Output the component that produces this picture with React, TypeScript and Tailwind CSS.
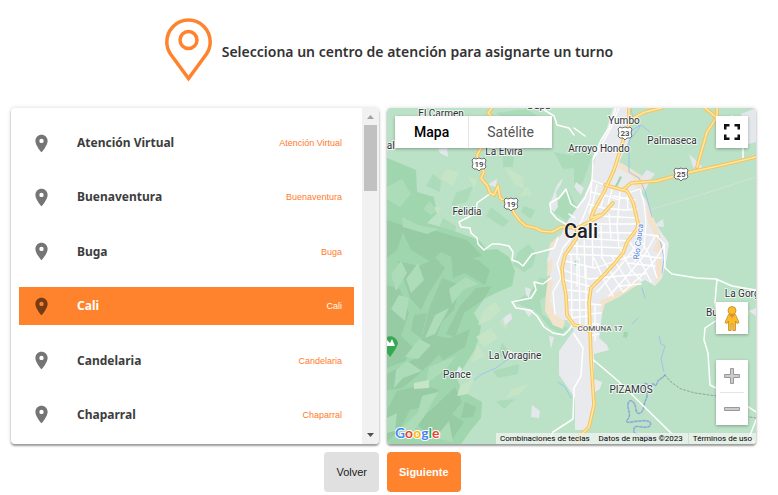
import React, { useState } from 'react';

const CENTERS = ['Atención Virtual', 'Buenaventura', 'Buga', 'Cali', 'Candelaria', 'Chaparral'];

const URBAN =
  'M226 0L245 0L243 30L232 54L246 62L254 69L250 79L259 92L265 109L272 121L282 135L280 149L275 170L268 178L258 172L232 187L217 194L215 207L212 230L220 237L222 242L207 246L207 271L215 274L213 281L208 284L208 300L200 322L188 322L188 290L172 267L172 243L187 222L180 212L166 213L160 198L163 170L160 152L164 139L174 127L180 114L190 100L197 88L204 74L206 58L211 42L220 20Z';

const YELLOW_ROADS = [
  'M105 0L101 5L105 9L97 30L94 40L90 47L92 56L97 64L94 70L97 74L100 77L103 85L107 87L111 78L113 90L124 96L127 105L133 113L139 118L149 120L154 123L165 124L174 119L190 120L206 112L215 107L226 95',
  'M242 0L242 17L237 30L227 62L217 84L207 102L204 110L213 107',
  'M242 14L250 8L258 4L275 0',
  'M237 81L244 75L270 73L284 69L304 64L340 56L369 49',
  'M218 77L240 83L246 94L251 115L250 121L240 134L236 145L228 155L217 167L204 180L202 194L203 220L204 250L207 297L202 319L194 327L190 336',
  'M190 120L189 131L178 147L175 160L176 172L179 187L180 207L187 217L196 219L203 224',
  'M330 0L330 9L320 24L310 59',
  'M318 0L330 10',
];

const STREETS = [
  'M232 0L224 20L206 52L205 72L203 92L195 112L186 128L176 140L170 156L174 170L166 184L168 206',
  'M205 72L220 78L244 84L253 81L257 95L259 115L257 140L246 156',
  'M204 84L220 88L232 92M201 96L216 100M226 88L248 92M216 100L238 102L250 101M210 108L252 110M206 116L252 116M192 124L246 125L272 128M190 130L242 133M184 138L238 140M178 146L232 148',
  'M210 77L206 94L202 105M218 84L214 98M225 82L221 96M233 84L230 118M240 84L241 102M222 106L224 130M214 118L215 150M205 116L206 160M197 124L198 170M190 134L190 178M230 118L232 140',
  'M178 153L208 160L232 152L248 147L274 150M176 162L202 171L232 168L258 166M178 172L202 178M180 182L202 184M181 192L202 192M182 202L202 202M182 210L203 208',
  'M184 146L185 216M192 150L193 218M199 158L199 216M207 150L216 170L226 188M214 148L226 168L236 184M224 147L236 166L244 178M234 142L244 162L254 172M243 134L254 154L264 174M250 126L262 146L270 170',
  'M256 124L246 142L230 162L210 184M268 128L258 146L242 166L222 188M278 136L268 152L254 168L236 184M245 146L262 148M240 155L268 158M232 178L254 176',
  'M203 196L214 197M203 206L214 205M203 216L212 216M208 196L208 232M203 228L212 226',
];

const WHITE_LINES = [
  'M104 85L90 95L89 105L72 114L74 119L83 120L84 125L90 130L91 136L97 142L105 136L112 136L122 138L126 144L125 152L131 154L136 158L145 146L157 143L167 140L171 130',
  'M205 72L198 90L190 100L184 96L179 81L172 90L163 95L164 104L170 111L182 118',
  'M164 170L156 176L147 174L149 182L144 190L125 194L129 200L143 202L150 208L157 219L166 225L177 227L182 222L186 216',
  'M229 0L222 20L214 32L206 51',
  'M187 226L196 240L194 268L187 280L186 311L166 324L160 336',
  'M203 249L230 272L284 325',
  'M270 128L277 136L278 160L285 166L310 170L329 171L345 178L369 182',
  'M330 171L328 194L330 212L318 220L317 232L321 245L323 277L345 288L369 304',
  'M369 312L362 330L369 336M345 8L356 26L356 50M154 0L167 8L170 17L182 20L187 27M182 106L188 110M187 20L198 28',
];

const DARK_LAND =
  'M0 50L10 54L29 62L30 84L47 89L50 105L40 115L64 122L92 132L100 142L110 141L122 149L128 163L125 178L111 184L97 191L87 205L94 218L92 230L87 243L80 254L70 270L75 283L95 294L94 310L84 322L74 336L0 336Z';

const DARK_PATCHES = [
  'M0 112L18 118L10 142L0 150Z', 'M14 120L31 117L52 124L80 132L95 148L73 153L54 144L44 154L24 142Z',
  'M64 144L91 152L103 162L98 177L78 165L66 170Z', 'M11 153L32 158L49 150L58 160L42 185L34 202L23 190Z',
  'M0 177L13 181L22 205L14 228L27 240L18 253L0 260Z', 'M55 170L73 177L67 202L55 214L46 239L34 232L43 198Z',
  'M89 180L105 178L96 192L77 205L68 229L59 226L73 198Z', 'M27 207L40 205L34 230L24 223Z',
  'M0 266L31 249L50 228L66 231L48 251L31 267L15 280L0 282Z', 'M63 230L83 221L78 239L56 252L51 245Z',
  'M10 283L35 277L52 282L41 298L23 302L12 323L0 333L0 302Z', 'M43 303L68 279L75 294L65 306L77 314L64 333L42 328L29 315Z',
  'M78 294L89 299L86 309L74 310Z',
];

const LIGHT_PATCHES = [
  'M15 71L24 86L13 99L0 91L0 79Z', 'M43 93L50 104L44 107L36 101Z', 'M15 109L31 117L52 121L40 126L16 119Z',
  'M4 166L14 153L20 165L9 183Z', 'M31 155L37 172L24 185L19 171Z', 'M12 187L22 190L18 213L4 201Z',
  'M62 200L48 226L38 230L48 207Z', 'M79 169L91 176L76 182L65 196L62 181Z', 'M32 231L44 237L31 251L18 249Z',
  'M69 248L58 262L39 276L42 259Z', 'M20 253L35 263L16 270L7 280L9 262Z', 'M51 284L37 309L25 325L14 321L31 304L35 288Z',
  'M62 313L66 334L48 330Z', 'M0 310L10 305L8 323L0 325Z',
];

const PALE_PATCHES = [
  'M59 61L72 64L66 78L54 70Z', 'M118 59L136 69L137 81L127 76Z', 'M75 35L90 37L80 42Z', 'M140 78L145 87L132 88Z',
  'M47 99L55 100L50 105Z', 'M81 68L90 72L87 81Z', 'M97 202L108 194L114 202L102 213L91 217Z',
  'M89 229L104 220L111 230L97 239Z', 'M125 281L141 276L133 286L119 290Z', 'M73 278L87 270L81 286L70 288Z',
  'M27 275L42 272L42 280L27 281Z', 'M91 237L98 248L84 255Z', 'M112 213L123 208L119 222Z',
];

const MID_PATCHES = [
  'M109 5L139 1L151 8L124 15Z', 'M167 44L187 48L187 60L176 61Z', 'M116 47L127 49L126 59L116 59Z',
  'M46 66L54 73L53 84L39 78Z', 'M137 98L148 102L144 111L134 104Z', 'M69 85L86 78L80 94L64 98Z',
  'M104 99L122 113L116 119L99 108Z', 'M56 110L69 118L68 127L52 120Z', 'M131 144L142 136L149 146L146 158L137 164L126 157Z',
  'M143 184L153 170L161 171L163 186L153 192L155 206L170 216L181 220L174 226L163 220L151 205L138 199L127 194Z',
  'M106 263L132 256L131 266L111 270Z', 'M109 293L128 291L117 301Z', 'M75 304L90 297L89 310Z',
  'M115 234L123 245L111 250Z', 'M187 46L200 38L205 49L196 74L187 83Z', 'M172 92L181 82L190 99L180 113L167 105Z',
];

const GREY_SPOTS = [
  'M51 41L60 40L61 49L53 45Z', 'M103 75L110 71L109 79L102 77Z', 'M169 84L174 76L176 70L170 77L162 98L167 104L171 99Z',
  'M138 179L144 181L142 190L139 187Z', 'M119 208L124 205L125 211L118 217L116 211Z', 'M145 297L153 303L152 310L144 309Z',
  'M72 258L75 261L73 265L69 264Z', 'M162 228L167 229L164 241Z', 'M302 46L315 58L313 61L306 59Z', 'M276 111L277 119L266 118Z',
  'M189 74L197 80L194 87L187 79Z', 'M254 69L260 62L268 66L263 72L257 85Z', 'M272 128L282 137L279 150L271 145Z',
  'M362 203L369 200L369 208Z', 'M354 6L369 0L369 34L354 38Z', 'M137 202L147 202L142 209Z', 'M120 246L124 242L130 250L120 251Z',
];

const BEIGE = [
  'M232 54L254 67L257 76L255 84L248 78L246 69L231 60Z', 'M259 92L267 111L276 134L274 146L266 143L270 133L261 114Z',
  'M161 170L166 172L163 192L168 207L178 213L176 221L166 217L158 203L159 186Z', 'M213 193L238 180L250 171L252 176L232 189L218 196L215 206Z',
  'M270 147L276 154L274 168L268 178L269 160Z', 'M161 153L166 151L164 166L160 168Z', 'M173 126L163 136L162 144L168 136Z',
];

const MEANDER =
  'M278 267C274 272 272 270 270 275C268 282 266 272 265 277C264 287 262 286 262 278C258 272 254 278 259 283C263 288 257 292 257 298C256 306 250 308 249 302C248 292 242 290 241 296C240 302 245 306 241 311C236 317 246 313 253 313C262 312 265 314 263 318C258 322 247 315 247 321C246 328 250 324 253 328C255 332 262 324 265 331';

const LABELS = [
  { x: 54, y: 9, t: 'El Carmen' },
  { x: 152, y: 1, t: 'Dapa' },
  { x: 1, y: 41, t: 'nal' },
  { x: 117, y: 47, t: 'La Elvira' },
  { x: 212, y: 44, t: 'Arroyo Hondo' },
  { x: 237, y: 16, t: 'Yumbo' },
  { x: 285, y: 36, t: 'Palmaseca' },
  { x: 80, y: 107, t: 'Felidia' },
  { x: 128, y: 251, t: 'La Voragine' },
  { x: 70, y: 270, t: 'Pance' },
  { x: 244, y: 285, t: 'PIZAMOS' },
  { x: 358, y: 189, t: 'La Gorgo' },
  { x: 340, y: 208, t: 'Buchitolo' },
];

const SHIELDS = [
  { x: 92, y: 56, n: 19 },
  { x: 124, y: 96, n: 19 },
  { x: 238, y: 25, n: 23 },
  { x: 294, y: 66, n: 25 },
];

const PinIcon = ({ className }: { className: string }) => (
  <svg viewBox="0 0 24 24" fill="currentColor" className={className} aria-hidden="true">
    <path d="M12 2C8.13 2 5 5.13 5 9c0 5.25 7 13 7 13s7-7.75 7-13c0-3.87-3.13-7-7-7zm0 9.500a2.500 2.500 0 1 1 0-5 2.500 2.500 0 0 1 0 5z" />
  </svg>
);

const Header = () => (
  <header className="flex items-center justify-center gap-[10px] pt-[18px] pb-[22px]">
    <svg viewBox="0 0 47 68" className="h-[68px] w-[47px]" fill="none" stroke="#ff822c" strokeWidth="3.500" aria-hidden="true">
      <path d="M23.500 60.500L5.500 36C2.800 32 1.800 28.500 1.800 24A21.700 22 0 0 1 45.200 24C45.200 28.500 44.200 32 41.500 36Z" />
      <circle cx="23.500" cy="22" r="8.500" />
    </svg>
    <h1 className="font-['Noto_Sans','Open_Sans',sans-serif] text-[14px] leading-5 font-semibold text-[#333]">
      Selecciona un centro de atención para asignarte un turno
    </h1>
  </header>
);

const CenterList = () => {
  const [selected, setSelected] = useState('Cali');
  return (
    <section className="flex h-[336px] overflow-hidden rounded-[4px] bg-white shadow-[0_2px_2px_rgba(0,0,0,0.35),0_0_4px_rgba(0,0,0,0.15)]">
      <ul className="flex min-w-0 flex-1 flex-col justify-between px-2 pt-4 pb-[10px]">
        {CENTERS.map((name) => {
          const active = name === selected;
          return (
            <li key={name}>
              <button
                type="button"
                aria-pressed={active}
                onClick={() => setSelected(name)}
                className={`flex h-[38px] w-full items-center px-3 text-left ${active ? 'bg-[#ff822c] text-white' : 'text-[#3d3d3d]'}`}
              >
                <PinIcon className={`mr-[25px] size-[21px] ${active ? 'text-[#753c14]' : 'text-[#757575]'}`} />
                <span className="flex-1 font-['Noto_Sans','Open_Sans',sans-serif] text-[12px] leading-5 font-bold">{name}</span>
                <span className={`font-['Liberation_Sans',Arial,sans-serif] text-[9px] leading-5 ${active ? 'text-white' : 'text-[#ff7a2a]'}`}>
                  {name}
                </span>
              </button>
            </li>
          );
        })}
      </ul>
      <div className="flex w-[17px] flex-col items-center bg-[#f1f1f1]">
        <svg viewBox="0 0 17 17" className="size-[17px]" aria-hidden="true">
          <path d="M5 11L8.500 7L12 11Z" fill="#a3a3a3" />
        </svg>
        <div className="h-[66px] w-[13px] bg-[#c1c1c1]" />
        <svg viewBox="0 0 17 17" className="mt-auto size-[17px]" aria-hidden="true">
          <path d="M5 6L8.500 10L12 6Z" fill="#505050" />
        </svg>
      </div>
    </section>
  );
};

const MapDrawing = () => (
  <svg viewBox="0 0 369 336" preserveAspectRatio="xMidYMid slice" className="block h-full w-full" role="img" aria-label="Cali">
    <rect width="369" height="336" fill="#bbe2c6" />
    <path d={MID_PATCHES.join('')} fill="#abdbb9" />
    <path d={DARK_LAND} fill="#a0d6ae" />
    <path d={DARK_PATCHES.join('')} fill="#96cba4" />
    <path d={LIGHT_PATCHES.join('')} fill="#addcb8" />
    <path d={PALE_PATCHES.join('')} fill="#c6e5c6" />
    <path d={GREY_SPOTS.join('')} fill="#e4e8ec" />
    <path d={URBAN} fill="#e8eaed" />
    <path d={BEIGE.join('')} fill="#f3e3cd" />
    <path d="M228 78L233 68L235 69L230 79ZM187 154L191 151L192 155L188 158ZM237 224L241 224L240 230L236 229Z" fill="#a0d6ae" />
    <g fill="none" strokeLinejoin="round" strokeLinecap="round">
      <path d="M265 101L320 85L369 69" stroke="#d5dfdc" strokeWidth="1" />
      <path
        d="M244 0L246 12L253 19L247 27L242 33L242 64L252 70L258 83L265 109M245 22L254 17L263 24M272 127L277 150L275 165M255 180L258 190M245 216L251 210M272 228L274 236L278 238L274 251L277 264M87 272L95 266L109 260L120 252L138 245M171 274L178 279L184 290"
        stroke="#9fc3ee"
        strokeWidth="1"
      />
      <path d={MEANDER} stroke="#a3c4ea" strokeWidth="1.800" />
      <path d={MEANDER} stroke="#7d9488" strokeWidth="0.700" strokeDasharray="2 2" />
      <path d="M278 267L284 274L294 281L308 285L330 288L345 306L369 310" stroke="#8fa39a" strokeWidth="1" strokeDasharray="2 2" />
      <path d={STREETS.join('')} stroke="#fff" strokeWidth="1.300" />
      <path d={WHITE_LINES.join('')} stroke="#fff" strokeWidth="1.500" />
      <path d={YELLOW_ROADS.join('')} stroke="#f9c358" strokeWidth="3.600" />
      <path d={YELLOW_ROADS.join('')} stroke="#fde7a6" strokeWidth="1.600" />
    </g>
    {SHIELDS.map(({ x, y, n }) => (
      <g key={`${x}-${y}`} transform={`translate(${x} ${y})`}>
        <path d="M-5 -6L-3 -5L0 -6L3 -5L5 -6L7 -4L6 0L7 3L5 5L2 5L0 7L-2 5L-5 5L-7 3L-6 0L-7 -4Z" fill="#fff" stroke="#6b6f73" strokeWidth="1" />
        <text y="3" textAnchor="middle" className="font-[Roboto,sans-serif] text-[8px] font-medium" fill="#3c4043">{n}</text>
      </g>
    ))}
    <path d="M3 249L-5 238A8 8 0 1 1 11 235Q10 240 3 249Z" fill="#34a853" />
    <path d="M0 237L0 232L3 235L5 231L8 238L0 238Z" fill="#fff" />
    <g textAnchor="middle" paintOrder="stroke" stroke="#fff" strokeOpacity="0.75" strokeWidth="2" strokeLinejoin="round" fill="#2f3337">
      {LABELS.map(({ x, y, t }) => (
        <text key={t} x={x} y={y} className="font-[Roboto,sans-serif] text-[10px]">{t}</text>
      ))}
      <text x="213" y="223" className="font-[Roboto,sans-serif] text-[8px] font-medium" fill="#5f6368">COMUNA 17</text>
      <text x="194" y="130" className="font-[Roboto,sans-serif] text-[20px] font-medium" fill="#202124">Cali</text>
      <text transform="translate(254 134) rotate(-83)" className="font-[Roboto,sans-serif] text-[8px]" fill="#4a80d8">Río Cauca</text>
    </g>
  </svg>
);

const control = 'absolute right-2 flex w-8 bg-white shadow-[0_1px_3px_rgba(0,0,0,0.3)]';

const MapPanel = () => (
  <section className="relative h-[336px] overflow-hidden rounded-[4px] font-[Roboto,sans-serif] shadow-[0_2px_2px_rgba(0,0,0,0.35),0_0_4px_rgba(0,0,0,0.15)]">
    <MapDrawing />
    <div className="absolute top-2 left-2 flex h-8 bg-white text-[14px] leading-8 shadow-[0_1px_3px_rgba(0,0,0,0.3)]">
      <button type="button" className="px-[19px] font-medium text-black">Mapa</button>
      <button type="button" className="border-l border-[#e6e6e6] px-[18px] text-[#565656]">Satélite</button>
    </div>
    <button type="button" aria-label="Pantalla completa" className={`${control} top-2 h-8 items-center justify-center`}>
      <svg viewBox="0 0 16 16" className="size-4" fill="none" stroke="#111" strokeWidth="2.500">
        <path d="M1.250 5.500V1.250H5.500M10.500 1.250H14.750V5.500M14.750 10.500V14.750H10.500M5.500 14.750H1.250V10.500" />
      </svg>
    </button>
    <button type="button" aria-label="Street View" className={`${control} bottom-[110px] h-8 items-center justify-center`}>
      <svg viewBox="0 0 16 25" className="h-[25px] w-4" stroke="#c58a2a" strokeWidth="0.800" strokeLinejoin="round">
        <path d="M4.500 8.500H11.500L15 16.500L13 17.500L11.500 15V24.500H8.800V18H7.200V24.500H4.500V15L3 17.500L1 16.500Z" fill="#fbbc2c" />
        <circle cx="8" cy="4.500" r="4" fill="#fbbc2c" />
        <path d="M5 8.500L8 12L11 8.500Z" fill="#e98b1e" stroke="none" />
      </svg>
    </button>
    <div className={`${control} bottom-[19px] flex-col items-center`}>
      <button type="button" aria-label="Acercar" className="flex size-8 items-center justify-center">
        <svg viewBox="0 0 16 16" className="size-4" fill="#ccc" stroke="#999" strokeWidth="1">
          <path d="M6.500 0.500H9.500V6.500H15.500V9.500H9.500V15.500H6.500V9.500H0.500V6.500H6.500Z" />
        </svg>
      </button>
      <div className="h-px w-6 bg-[#e6e6e6]" />
      <button type="button" aria-label="Alejar" className="flex size-8 items-center justify-center">
        <svg viewBox="0 0 16 16" className="size-4" fill="#ccc" stroke="#999" strokeWidth="1">
          <path d="M0.500 6.500H15.500V9.500H0.500Z" />
        </svg>
      </button>
    </div>
    <svg viewBox="0 0 48 20" className="absolute bottom-0 left-2 h-5 w-12" role="img" aria-label="Google">
      <text y="14" className="font-[Lato,sans-serif] text-[14px] font-bold" paintOrder="stroke" stroke="#fff" strokeWidth="2" strokeLinejoin="round">
        <tspan fill="#4285f4">G</tspan>
        <tspan fill="#ea4335">o</tspan>
        <tspan fill="#fbbc05">o</tspan>
        <tspan fill="#4285f4">g</tspan>
        <tspan fill="#34a853">l</tspan>
        <tspan fill="#ea4335">e</tspan>
      </text>
    </svg>
    <div className="absolute right-0 bottom-0 flex bg-[#f5f5f5]/70 text-[8px] leading-[11px] text-black">
      <button type="button" className="px-1">Combinaciones de teclas</button>
      <span className="px-[5px]">Datos de mapas ©2023</span>
      <a href="#terminos" className="border-l border-[#d0dcd2] px-1">Términos de uso</a>
    </div>
  </section>
);

export default function App() {
  return (
    <div className="bg-white">
      <Header />
      <main className="grid grid-cols-[368fr_369fr] gap-2 pr-[22px] pl-[11px] font-['Liberation_Sans',Arial,sans-serif]">
        <CenterList />
        <MapPanel />
        <button type="button" className="h-10 justify-self-end rounded-[4px] bg-[#e0e0e0] px-3 text-[11px] text-[#212121]">
          Volver
        </button>
        <button type="button" className="h-10 justify-self-start rounded-[4px] bg-[#ff822c] px-3 text-[11px] font-bold text-white">
          Siguiente
        </button>
      </main>
    </div>
  );
}
